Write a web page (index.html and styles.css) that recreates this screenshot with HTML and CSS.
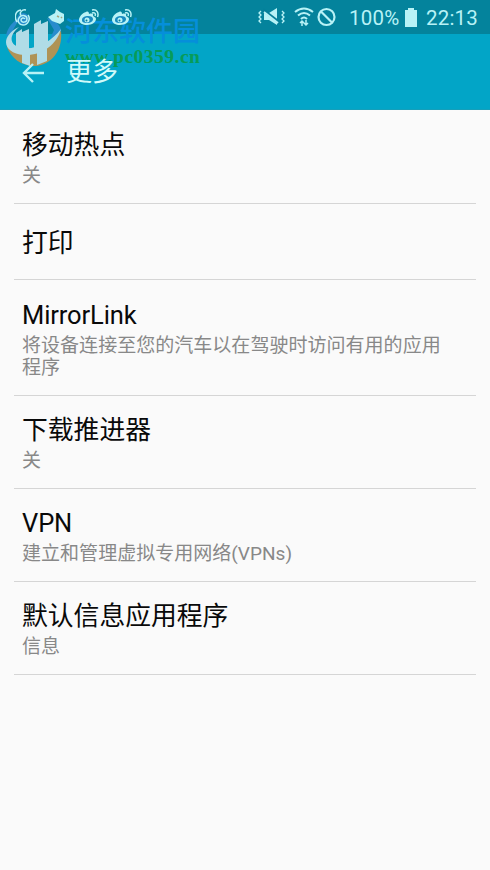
FILE: index.html
```html
<!DOCTYPE html>
<html lang="zh-CN">
<head>
<meta charset="utf-8">
<title>更多</title>
<link rel="stylesheet" href="styles.css">
</head>
<body>
<div class="screen">
  <header class="header">
    <div class="status">
      <div class="notifications">
        <svg width="16" height="18" viewBox="0 0 16 18" fill="none" stroke="currentColor" stroke-width="1.500"><circle cx="8" cy="10" r="6" fill="#288ccd" stroke="none"/><path d="M6 1C0 2-1 8 2 13M11 1C7 0 4 4 6 6M13 6c3 4 0 10-5 10-4 0-6-4-4-7 2-4 8-3 8 1 0 4-6 4-6 1 0-2 3-3 4-1"/></svg>
        <svg class="cat" width="18" height="18" viewBox="0 0 18 18"><path d="M1 8 8 4 9 0 13 3 17 5 17 12 13 15 5 12Z" fill="currentColor"/><path d="M10 7l2 1M14 8l1 1" stroke="#a9a37c" stroke-width="1.500"/></svg>
        <svg width="21" height="18" viewBox="0 0 21 18"><use href="#weibo"/></svg>
        <svg class="second" width="21" height="18" viewBox="0 0 21 18"><g id="weibo"><path fill="currentColor" d="M7 3C3 4 0 8 0 11c0 3 4 5 8 5 5 0 9-3 9-6 0-2-2-2-3-3 1-2-1-3-4-2 0-2-1-3-3-2Z"/><path d="M3 11c0-3 3-4 6-4 3 0 5 1 5 3s-2 4-6 4-5-1-5-3Z" fill="#188bc0"/><circle cx="8" cy="11" r="2.500" fill="currentColor"/><circle cx="7.500" cy="11.500" r="1" fill="#087c9b"/><path d="M13 4c3-1 4 1 3 3M13 1c5-1 7 3 5.500 7" fill="none" stroke="currentColor" stroke-width="1.500"/></g></svg>
      </div>
      <div class="system">
        <svg width="28" height="20" viewBox="0 0 28 20"><path d="M6 6h5l8-5v17l-8-5H6Z" fill="currentColor"/><path d="M5 3 22 16" stroke="#067f99" stroke-width="3"/><path d="M6 5 20 16" stroke="currentColor" stroke-width="1.800"/><path d="M3 4 1 6l2 2-2 2 2 2-2 2 2 2M24 4l2 2-2 2 2 2-2 2 2 2-2 2" fill="none" stroke="currentColor" stroke-width="1.300"/></svg>
        <svg class="wifi" width="20" height="20" viewBox="0 0 20 20" fill="none" stroke="currentColor" stroke-width="2.100"><path d="M1 5Q10-2 19 5M4 8.500Q10 3.500 16 8.500M7 12Q10 9 13 12"/><path d="M8 19v-5m-2 2 2-2 2 2M12 13v5m-2-2 2 2 2-2" stroke-width="1.500"/></svg>
        <svg class="blocked" width="19" height="20" viewBox="0 0 19 20" fill="none" stroke="currentColor" stroke-width="2.200"><circle cx="9.500" cy="10" r="8"/><path d="m4 4.500 11 11"/></svg>
        <span class="percent">100%</span>
        <svg class="battery" width="12" height="19" viewBox="0 0 12 19"><path d="M3 0h6v2h3v17H0V2h3Z" fill="currentColor"/></svg>
        <span class="time">22:13</span>
      </div>
    </div>
    <div class="appbar">
      <svg class="back" width="22" height="20" viewBox="0 0 22 20" fill="none" stroke="currentColor" stroke-width="2.400"><path d="M22 10H2M11 1 2 10l9 9"/></svg>
      <h1>更多</h1>
    </div>
    <div class="watermark">
      <svg class="emblem" width="58" height="58" viewBox="0 0 58 58">
        <path d="M1 28Q3 15 18 8 10 16 7 25Z" fill="#288ccd"/>
        <path d="M42 10C51 12 56 18 56 23L45 31 49 22Z" fill="#288ccd"/>
        <path d="M2 39Q30 49 56 23C58 42 47 57 30 58C16 58 6 50 2 39Z" fill="#af9356"/>
        <path d="M11 25 17 21V24L24 21V41H11ZM29 16 36 12V16L43 13V36L29 41ZM17 44h8v14l-8-3ZM32 43l10-4v14l-10 4Z" fill="#b0dce7"/>
        <path d="M14 19C-5 28-3 45 19 47C36 48 52 37 56 21C47 33 31 42 18 40C3 38 4 27 14 19Z" fill="#b0dce7"/>
      </svg>
      <div class="marktext"><span class="sitename">河东软件园</span><span class="siteurl">www.pc0359.cn</span></div>
    </div>
  </header>
  <main class="list">
    <section class="row first"><h2>移动热点</h2><p>关</p></section>
    <section class="row single"><h2>打印</h2></section>
    <section class="row tall"><h2 class="latin">MirrorLink</h2><p>将设备连接至您的汽车以在驾驶时访问有用的应用程序</p></section>
    <section class="row"><h2>下载推进器</h2><p>关</p></section>
    <section class="row"><h2 class="latin">VPN</h2><p>建立和管理虚拟专用网络(VPNs)</p></section>
    <section class="row"><h2>默认信息应用程序</h2><p>信息</p></section>
  </main>
</div>
</body>
</html>
```
FILE: styles.css
```css
* { box-sizing: border-box; }
body { margin: 0; background: #fafafa; font-family: Roboto, "Noto Sans CJK SC", sans-serif; }
h1, h2, p { margin: 0; font-weight: 400; }
svg { display: block; flex: none; }
.screen { width: 490px; height: 870px; overflow: hidden; background: #fafafa; }
.header { position: relative; height: 110px; background: #02a5c7; color: #b8f2f6; isolation: isolate; }
.status { height: 34px; background: #04839c; display: flex; justify-content: space-between; padding: 0 11px 0 15px; }
.notifications { position: relative; z-index: 2; display: flex; padding-top: 9px; }
.notifications .cat { margin: 0 14px 0 16px; }
.notifications .second { margin-left: 12px; }
.system { display: flex; align-items: center; font-size: 20.5px; }
.wifi { margin-left: 8px; }
.blocked { margin-left: 3px; }
.percent { margin-left: 13px; width: 52px; line-height: 36px; padding-top: 2px; letter-spacing: 0.2px; }
.battery { margin-left: 4px; }
.time { margin-left: 9px; width: 53px; padding-top: 2px; letter-spacing: 0.2px; }
.appbar { height: 76px; display: flex; align-items: center; padding-left: 22px; border-bottom: 1px solid #159fba; }
.back { position: relative; top: 1px; z-index: 2; }
.appbar h1 { position: relative; z-index: 2; margin-left: 22px; font-size: 26px; line-height: 36px; color: #d0fafa; }
.watermark { position: absolute; z-index: 1; left: 5px; top: 8px; display: flex; }
.marktext { display: flex; flex-direction: column; padding: 6px 0 0 2px; white-space: nowrap; }
.sitename { font-family: "Noto Sans CJK SC", sans-serif; font-weight: 500; font-size: 27px; line-height: 31px; color: #058fda; }
.siteurl { font-family: "Liberation Serif", serif; font-weight: 700; font-size: 19.5px; line-height: 22px; letter-spacing: 0.5px; color: #079b58; position: relative; top: 1px; }
.list { padding: 0 14px; }
.row { height: 93px; padding: 19px 20px 0 8px; border-bottom: 1px solid #d5d5d5; }
.first { height: 94px; padding-top: 20px; }
.single { height: 76px; padding-top: 24px; }
.tall { height: 116px; padding-top: 20px; }
.row h2 { font-size: 25.8px; line-height: 30px; color: #090909; }
.row h2.latin { font-size: 25.5px; letter-spacing: -0.1px; }
.row p { margin-top: 5px; font-size: 19.05px; line-height: 22px; color: #888; }
```
